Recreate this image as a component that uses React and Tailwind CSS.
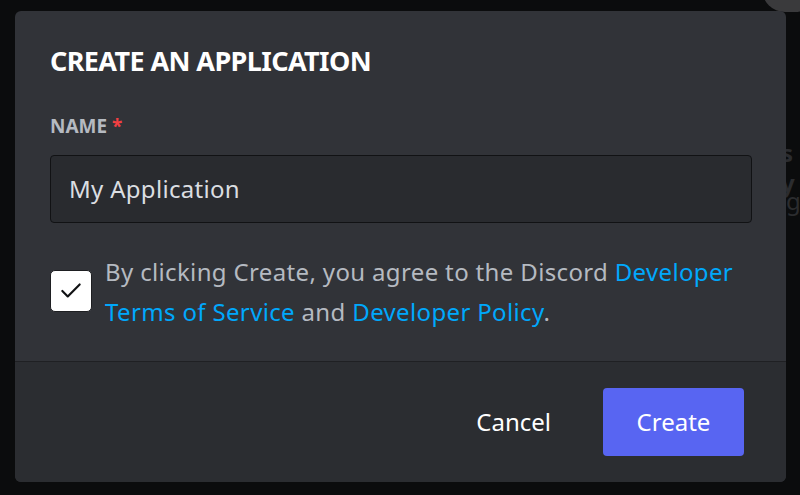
import { Check } from "lucide-react";

export default function App() {
  return (
    <div
      className="relative w-[800px] h-[495px] overflow-hidden bg-[#0b0c0d] pt-[11px] pl-[15px]"
      style={{ fontFamily: '"Noto Sans", "Open Sans", sans-serif' }}
    >
      {/* faint backdrop content */}
      <div className="absolute -top-[34px] left-[762px] w-[56px] h-[46px] rounded-full bg-[#3a3a3c]" />
      <div className="absolute top-[138px] left-[781px] text-[24px] leading-[30px] text-[#2b2c2f] font-bold">s y</div>
      <div className="absolute top-[186px] left-[786px] text-[24px] leading-[30px] text-[#2b2c2f]">g</div>

      <div className="relative w-[771px] h-[471px] rounded-[6px] bg-[#313338] flex flex-col overflow-hidden">
        <div className="flex-1 px-[35px] pt-[34px]">
          <h1 className="text-[27px] leading-[32px] font-bold text-white tracking-[-0.6px]">
            CREATE AN APPLICATION
          </h1>
          <div className="mt-[37px] text-[19px] leading-[24px] font-bold text-[#b5bac1]">
            NAME <span className="text-[#f23f42]">*</span>
          </div>
          <div className="mt-[17px] h-[68px] w-[702px] rounded-[4px] border border-[#111214] bg-[#292b2f] flex items-center px-[18px] text-[24px] tracking-[0.3px] text-[#dbdee1]">
            My Application
          </div>
          <div className="mt-[29px] flex gap-[13px] w-[702px]">
            <div className="mt-[18px] w-[42px] h-[42px] shrink-0 rounded-[5px] bg-white border border-[#1e1f22] flex items-center justify-center">
              <Check className="w-[26px] h-[26px] text-[#111214]" strokeWidth={2} />
            </div>
            <p className="text-[24px] leading-[40px] tracking-[0.35px] text-[#b5bac1]">
              By clicking Create, you agree to the Discord{" "}
              <span className="text-[#00a8fc]">Developer Terms of Service</span> and{" "}
              <span className="text-[#00a8fc]">Developer Policy</span>.
            </p>
          </div>
        </div>
        <div className="h-[121px] border-t border-[#1f2023] bg-[#2b2d31] flex items-center justify-end gap-[52px] pr-[42px]">
          <button className="text-[24px] text-white">Cancel</button>
          <button className="w-[141px] h-[68px] rounded-[4px] bg-[#5865f2] text-[24px] text-white">
            Create
          </button>
        </div>
      </div>
    </div>
  );
}
